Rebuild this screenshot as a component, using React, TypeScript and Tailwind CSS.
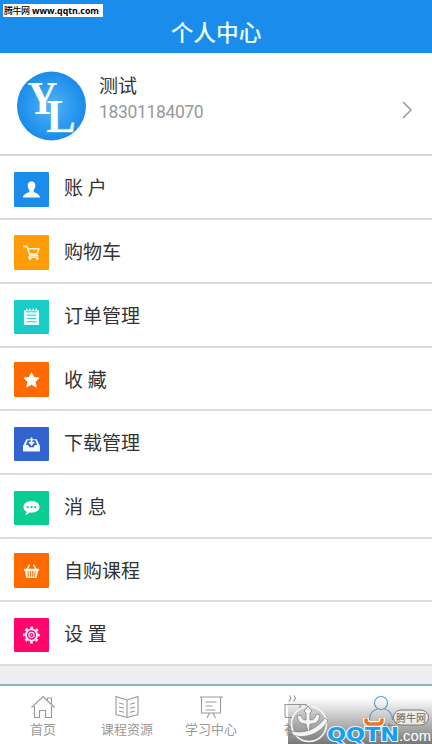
import type { ReactNode } from 'react';

const glyphs: Record<string, ReactNode> = {
  user: (
    <path fill="#fff" d="M18 9c-3 0-4.200 2-4 4.500.1 2.200 1 3.500 1.700 4.300v1.700c-.6 1.600-6.700 2.200-6.700 6.500h18c0-4.300-6.100-4.900-6.700-6.500v-1.700c.7-.8 1.600-2.100 1.700-4.300C22.200 11 21 9 18 9z" />
  ),
  cart: (
    <g fill="none" stroke="#fff0d8" strokeWidth="1.700" strokeLinejoin="round" strokeLinecap="round">
      <path d="M10 11h3l3.500 9.500h8M14 13.500h12l-2 5-8 .6M16.500 20.500l-1.300 2h9.500" />
      <circle cx="16.500" cy="24" r="1" fill="#fff" strokeWidth="1" />
      <circle cx="24" cy="24" r="1" fill="#fff" strokeWidth="1" />
    </g>
  ),
  note: (
    <g>
      <path fill="#effffd" d="M10 11h16v15.500H10z" />
      <path stroke="#effffd" strokeWidth="1.500" d="M13 9v3M16.300 9v3M19.700 9v3M23 9v3" />
      <path stroke="#18ccc7" strokeWidth="1" d="M12 12.500h12M13 16h10M13 19.500h10M13 23h10" />
    </g>
  ),
  star: (
    <path fill="#fff" stroke="#fff" strokeWidth="1" strokeLinejoin="round" d="M18 10l2.400 5.300 5.600.6-4.200 3.800 1.200 5.800-5-3-5 3 1.200-5.800-4.200-3.800 5.600-.6z" />
  ),
  download: (
    <g>
      <path fill="#f4f7ff" d="M12.500 13h11l3.500 7v6H9v-6z" />
      <path fill="#3264d0" d="M14 14h8l2 5h-2.500l-1.200 2.500h-4.600L14.500 19H12z" />
      <path fill="#f4f7ff" d="M17 11h2v5h2.500L18 20l-3.500-4H17z" />
    </g>
  ),
  message: (
    <g>
      <path fill="#fff" d="M18 10.500c-5 0-8.500 2.700-8.500 6.300 0 2.200 1.200 4 3.200 5 0 1.300-.7 2.400-1.700 3.200 2.300-.1 4-.9 5.300-2.200 6.200.7 10.200-2.100 10.200-6 0-3.600-3.500-6.300-8.500-6.300z" />
      <g fill="#0acd94"><circle cx="14" cy="17" r="1.200" /><circle cx="18" cy="17" r="1.200" /><circle cx="22" cy="17" r="1.200" /></g>
    </g>
  ),
  basket: (
    <g>
      <path fill="none" stroke="#fff5e8" strokeWidth="1.500" d="M13 17l3-6M23 17l-3-6" />
      <path fill="#fff5e8" d="M10 15.500h16V18h-1l-1.500 7.500h-11L11 18h-1z" />
      <path stroke="#ff6900" strokeWidth="1" d="M14.300 18l.5 6M16.900 18l.1 6M19.300 18l-.1 6M21.800 18l-.5 6" />
    </g>
  ),
  gear: (
    <g fill="none" stroke="#ffe9f2">
      <circle cx="18" cy="18" r="7.600" strokeWidth="2.600" strokeDasharray="2.985 2.985" strokeDashoffset="1.490" />
      <circle cx="18" cy="18" r="5.900" strokeWidth="2" />
      <circle cx="18" cy="18" r="2.700" strokeWidth="1.300" />
      <circle cx="18" cy="18" r=".5" strokeWidth="1" />
    </g>
  ),
};

const rows = [
  { label: '账 户', glyph: 'user', row: 'h-16', tile: 'mt-4 h-[35px] bg-[#1a8dec]' },
  { label: '购物车', glyph: 'cart', row: 'h-16', tile: 'mt-[15px] h-[35px] bg-[#ff9c08]' },
  { label: '订单管理', glyph: 'note', row: 'h-16', tile: 'mt-4 h-[34px] bg-[#18ccc7]' },
  { label: '收 藏', glyph: 'star', row: 'h-[63px]', tile: 'mt-[14px] h-[35px] bg-[#ff6900]' },
  { label: '下载管理', glyph: 'download', row: 'h-16', tile: 'mt-4 h-[34px] bg-[#3264d0]' },
  { label: '消 息', glyph: 'message', row: 'h-16', tile: 'mt-4 h-[34px] bg-[#0acd94]' },
  { label: '自购课程', glyph: 'basket', row: 'h-[63px]', tile: 'mt-[14px] h-[35px] bg-[#ff6900]' },
  { label: '设 置', glyph: 'gear', row: 'h-16', tile: 'mt-4 h-[34px] bg-[#ff056d]' },
];

const tabs = [
  { label: '首页', width: 'w-[86px]', art: <path d="M2.500 12.500 14 1.500l11.500 11M5.500 11v11.500h5v-7h6v7h6V11M18.500 5V3h4v6" /> },
  { label: '课程资源', width: 'w-[82px]', art: <><path d="M14 5 3 1.500v18L14 22.500l11-3v-18zM14 5v17.500" /><path d="M6 8l5 1.300M6 12l5 1.300M6 16l5 1.300M22 8l-5 1.300M22 12l-5 1.300M22 16l-5 1.300" /></> },
  { label: '学习中心', width: 'w-[86px]', art: <><path d="M3 2h23M4.500 2v16h19V2" /><path d="M8.500 7h11M8.500 11h7M8.500 15h10M12.500 18 10 23M16 18l2.500 5" /></> },
  { label: '社区', width: 'w-[86px]', art: <path d="M2 9.500v11q0 2 2 2h11q2 0 2-2v-11zM17 9.500h6v7h-6M6 6.500l2-3-1.500-3M10.500 6.500l2-3-1.500-3" /> },
  { label: '我的', width: 'w-[82px]', active: true, art: <><circle cx="14" cy="8" r="6.500" /><path d="M2.500 25c0-7 4-10 8-11M25.500 25c0-7-4-10-8-11" /></> },
];

function Watermark() {
  return (
    <svg className="absolute bottom-0 left-[288px]" width="144" height="46" viewBox="0 0 144 46">
      <defs>
        <linearGradient id="shade" x1="0" y1="0" x2="0" y2="1">
          <stop offset="0" stopColor="#777" stopOpacity="0" />
          <stop offset=".45" stopColor="#777" stopOpacity=".45" />
          <stop offset="1" stopColor="#707070" stopOpacity=".95" />
        </linearGradient>
        <linearGradient id="disc" x1="0" y1="0" x2="0" y2="1">
          <stop offset="0" stopColor="#d8d8d8" />
          <stop offset="1" stopColor="#808080" />
        </linearGradient>
      </defs>
      <path fill="url(#shade)" d="M0 0h144v46H0z" />
      <circle cx="21" cy="26" r="17.500" fill="url(#disc)" stroke="#f7f7f7" strokeWidth="1.500" />
      <path fill="#f4f4f4" stroke="#777" strokeWidth=".7" d="M20 8l4 5-2 2v7c4 0 5-2 6-6l4 1c-1 7-4 9-10 9l-1 12-3-12c-5 0-8-2-9-8l4-1c1 4 2 5 5 5v-7l-2-2z" />
      <path fill="#f4f4f4" stroke="#777" strokeWidth=".6" d="M3 33c13 3 25-1 34-13l3 3C31 37 16 41 5 37z" />
      <path fill="none" stroke="#fff" strokeWidth="6" d="M78 20v2q0 4 4 4h8q4 0 4-4v-2" />
      <path fill="none" stroke="#e5752f" strokeWidth="3.600" d="M78 20.500v1.500q0 4 4 4h8q4 0 4-4v-1.500" />
      <rect x="105.500" y="12" width="35" height="15" rx="7.500" fill="#ededed" stroke="#777" />
      <text x="108" y="23.500" fontSize="10.500" textLength="30" lengthAdjust="spacingAndGlyphs" fontFamily="Noto Sans CJK SC, sans-serif" fill="#666">腾牛网</text>
      <g fontWeight="700" fontFamily="DejaVu Sans, sans-serif" fill="#16a0ed" stroke="#e5f6ff" strokeWidth="2" paintOrder="stroke">
        <text x="39" y="43" fontSize="19" textLength="72" lengthAdjust="spacingAndGlyphs">QQTN</text>
      </g>
      <text x="111" y="43" fontSize="15" textLength="32" lengthAdjust="spacingAndGlyphs" fontFamily="Liberation Sans, sans-serif" fill="#fff">.com</text>
    </svg>
  );
}

export default function App() {
  return (
    <div className="relative h-[744px] w-[432px] overflow-hidden bg-white font-['Roboto','Noto_Sans_CJK_SC',sans-serif] text-[#333]">
      <header className="flex h-[53px] justify-center bg-[#1a8dec] pt-[19px]">
        <h1 className="text-[22.700px] font-medium leading-[30px] text-[#e9ffff]">个人中心</h1>
      </header>
      <div className="absolute left-[3px] top-1 h-[13px] w-[100px] whitespace-nowrap bg-white pl-px text-black">
        <svg className="overflow-visible" width="98" height="13">
          <text x="0" y="10" fontSize="9" textLength="26" fontFamily="Noto Sans CJK SC, sans-serif" fontWeight="500">腾牛网</text>
          <text x="28" y="9.500" fontSize="9.500" fontWeight="700" textLength="67" lengthAdjust="spacingAndGlyphs" fontFamily="Open Sans, sans-serif">www.qqtn.com</text>
        </svg>
      </div>

      <section className="flex h-[103px] border-b-2 border-[#d8d8d8] pl-[17px]">
        <svg className="mt-[18px] shrink-0" width="70" height="70" viewBox="0 0 70 70">
          <defs>
            <radialGradient id="avatar">
              <stop offset="0" stopColor="#50b4f6" />
              <stop offset="1" stopColor="#198bea" />
            </radialGradient>
          </defs>
          <circle cx="34.500" cy="35" r="34.500" fill="url(#avatar)" />
          <g fill="#fff" fontFamily="Liberation Serif, serif" fontWeight="700">
            <text x="10.500" y="42.500" fontSize="47" textLength="30" lengthAdjust="spacingAndGlyphs">Y</text>
            <text x="29.500" y="60.500" fontSize="47" textLength="29" lengthAdjust="spacingAndGlyphs" stroke="#46aaf3" strokeWidth="2" paintOrder="stroke">L</text>
          </g>
        </svg>
        <div className="ml-3 flex-1 pt-5">
          <p className="text-[19px] leading-7">测试</p>
          <p className="-mt-px text-[17.500px] leading-6 tracking-[-0.350px] text-[#999]">18301184070</p>
        </div>
        <svg className="mr-[18px] mt-12" width="13" height="18" fill="none" stroke="#999" strokeWidth="1.500"><path d="m2 1 8 8-8 8" /></svg>
      </section>

      <main>
        {rows.map((row) => (
          <div key={row.label} className={`flex border-b-2 border-[#dedede] pl-[14px] ${row.row}`}>
            <div className={`flex w-[35px] items-center justify-center rounded-[1px] ${row.tile}`}>
              <svg width="35" height="34" viewBox="0 0 36 36">{glyphs[row.glyph]}</svg>
            </div>
            <span className="ml-[15px] pt-[19px] text-[19px] leading-7">{row.label}</span>
          </div>
        ))}
      </main>

      <div className="h-[18px] bg-[#eeeef2]" />
      <nav className="flex h-[60px] border-t-2 border-[#8db1c8]">
        {tabs.map((tab) => (
          <div key={tab.label} className={`flex flex-col items-center pt-[9px] ${tab.width} ${tab.active ? 'text-[#4ca4d8]' : 'text-[#999]'}`}>
            <svg className="overflow-visible" width="28" height="24" fill="none" stroke="currentColor" strokeWidth="1.100">{tab.art}</svg>
            <span className="text-[13px] leading-[22px]">{tab.label}</span>
          </div>
        ))}
      </nav>
      <Watermark />
    </div>
  );
}
